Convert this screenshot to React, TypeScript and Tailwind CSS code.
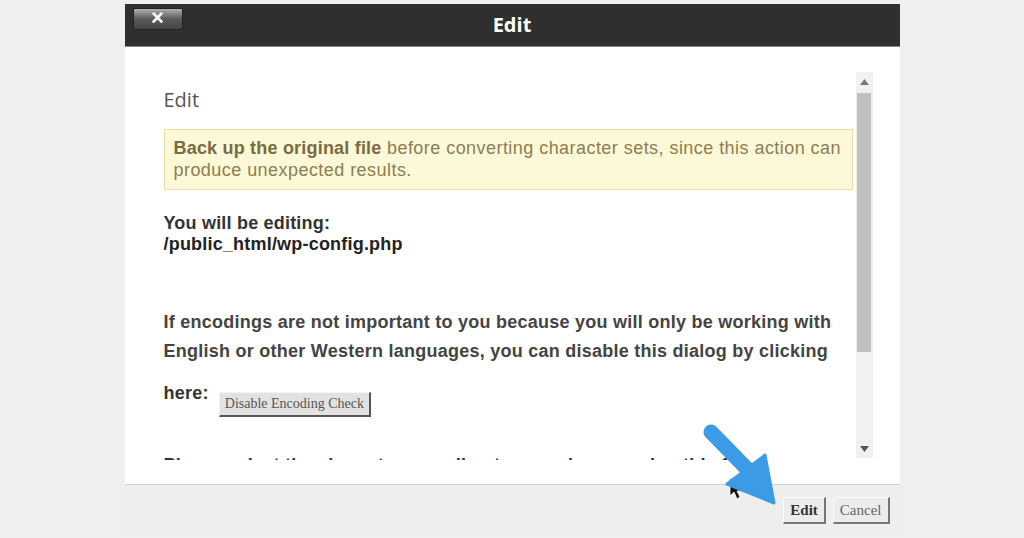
import React from "react";

const sans = { fontFamily: '"Liberation Sans", Arial, sans-serif' };
const serif = { fontFamily: '"Liberation Serif", "Times New Roman", serif' };
const heading = { fontFamily: '"Open Sans", "Noto Sans", sans-serif' };

function Scrollbar() {
  return (
    <div className="w-[17px] h-[386px] bg-[#f1f1f1] flex flex-col items-center">
      <div className="h-[19px] w-full flex items-center justify-center">
        <svg width="9" height="6" viewBox="0 0 9 6"><path d="M0 6 L4.5 0 L9 6 Z" fill="#777" /></svg>
      </div>
      <div className="mt-[2px] w-[14px] h-[259px] bg-[#c1c1c1]" />
      <div className="flex-1" />
      <div className="h-[19px] w-full flex items-center justify-center">
        <svg width="9" height="6" viewBox="0 0 9 6"><path d="M0 0 L4.5 6 L9 0 Z" fill="#555" /></svg>
      </div>
    </div>
  );
}

export default function App() {
  return (
    <div className="w-[1024px] h-[538px] bg-[#efefef] flex justify-center pt-[4px] relative overflow-hidden" style={sans}>
      <div className="w-[775px] h-[532px] flex flex-col bg-white">
        {/* title bar */}
        <div className="h-[43px] bg-[#2f2f2f] relative flex items-center justify-center border-b border-[#888]">
          <button className="absolute left-[8px] top-[4px] w-[50px] h-[22px] rounded-[2px] bg-gradient-to-b from-[#b0b0b0] via-[#5a5a5a] to-[#444] flex items-start justify-center border border-[#222]">
            <span className="text-white font-bold text-[22px] leading-[18px]" style={sans}>×</span>
          </button>
          <span className="text-white font-bold text-[20px]" style={heading}>Edit</span>
        </div>
        {/* body */}
        <div className="h-[437px] bg-white flex pt-[25px] pl-[39px]">
          <div className="w-[689px] h-[388px] overflow-hidden">
            <div className="text-[20px] text-[#555] leading-[28px] mt-[14px]" style={heading}>Edit</div>
            <div className="mt-[15px] h-[61px] bg-[#fcf8d8] border border-[#e6e0a6] px-[9px] pt-[7px] text-[18px] leading-[22px] tracking-[0.45px] text-[#8c7e4f]">
              <b className="text-[#7a6c3e] tracking-[0.2px]">Back up the original file</b> before converting character sets, since this action can produce unexpected results.
            </div>
            <div className="mt-[23px] text-[18px] leading-[21px] font-bold text-[#333] tracking-[0.2px]">
              <div>You will be editing:</div>
              <div className="text-[#222]">/public_html/wp-config.php</div>
            </div>
            <div className="mt-[53px] text-[18px] leading-[29px] font-bold text-[#444] tracking-[0.25px]">
              If encodings are not important to you because you will only be working with English or other Western languages, you can disable this dialog by clicking
            </div>
            <div className="mt-[17px] flex items-start text-[18px] leading-[20px] font-bold text-[#333] tracking-[0.25px]">
              <span>here:</span>
              <button className="ml-[10px] mt-[9px] h-[25px] px-[5px] bg-[#e2e2e2] text-[14px] font-normal tracking-normal text-[#555] border-t border-l border-[#f4f4f4] border-r-2 border-b-2 border-r-[#555] border-b-[#555]" style={serif}>
                Disable Encoding Check
              </button>
            </div>
            <div className="mt-[37px] text-[18px] leading-[22px] font-bold text-[#333] tracking-[0.25px]">
              Please select the character encoding to use when opening this file:
            </div>
          </div>
          <div className="ml-[3px]">
            <Scrollbar />
          </div>
        </div>
        {/* footer */}
        <div className="flex-1 bg-[#eeeeee] border-t border-[#cfcfcf] flex items-start justify-end pr-[10px] pt-[12px] gap-[7px]">
          <button className="h-[27px] px-[6px] bg-[#ececec] text-[15px] font-bold text-[#333] border-t border-l border-[#fafafa] border-r-2 border-b-2 border-r-[#777] border-b-[#777]" style={serif}>
            Edit
          </button>
          <button className="h-[27px] px-[6px] bg-[#ececec] text-[15px] text-[#666] border-t border-l border-[#fafafa] border-r-2 border-b-2 border-r-[#777] border-b-[#777]" style={serif}>
            Cancel
          </button>
        </div>
      </div>
      {/* cursor + arrow overlay */}
      <svg className="absolute left-0 top-0 pointer-events-none" width="1024" height="538" viewBox="0 0 1024 538">
        <path d="M730 478 L730 496 L734 492 L737 499 L740 497 L737 491 L742 491 Z" fill="#111" stroke="#fff" strokeWidth="0.8" />
        <line x1="711" y1="432" x2="755" y2="477" stroke="#3c9be6" strokeWidth="15" strokeLinecap="round" />
        <path d="M727 484 L765 455 L774 503 Z" fill="#3c9be6" stroke="#3c9be6" strokeWidth="3" strokeLinejoin="round" />
      </svg>
    </div>
  );
}
